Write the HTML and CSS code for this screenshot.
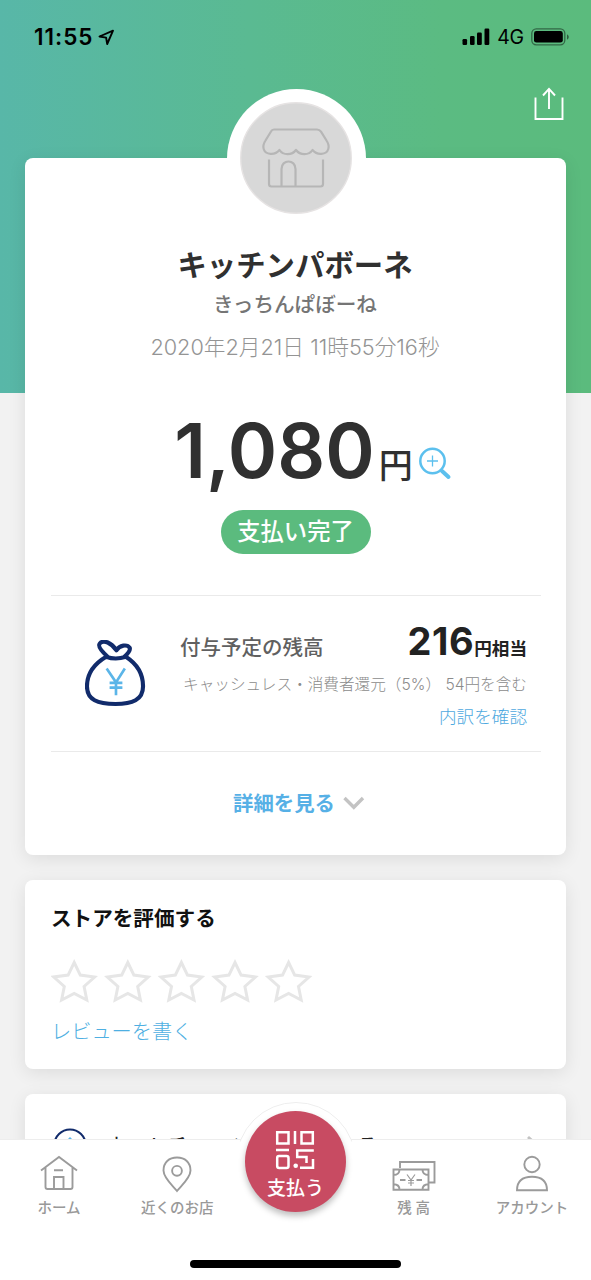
FILE: index.html
```html
<!DOCTYPE html>
<html lang="ja">
<head>
<meta charset="utf-8">
<title>支払い完了</title>
<link rel="stylesheet" href="styles.css">
</head>
<body>
<div class="screen">
  <header class="hero">
    <div class="status">
      <span class="clock">11:55</span>
      <svg class="location" width="17" height="17" viewBox="0 0 17 17"><path d="M1.5 7.5 15 1.7 9.2 15 8.1 8.6Z" fill="none" stroke="#000" stroke-width="1.9" stroke-linejoin="round"/></svg>
      <svg class="signal" width="28" height="18" viewBox="0 0 28 18"><rect x="0.5" y="11" width="4.6" height="6" rx="1.2"/><rect x="8" y="8" width="4.6" height="9" rx="1.2"/><rect x="15" y="4.5" width="4.8" height="12.5" rx="1.2"/><rect x="22.5" y="0.5" width="4.8" height="16.5" rx="1.2"/></svg>
      <span class="network">4G</span>
      <svg class="battery" width="39" height="18" viewBox="0 0 39 18"><rect x="0.8" y="0.8" width="33" height="16" rx="4.5" fill="none" stroke="#000" stroke-opacity=".45" stroke-width="1.3"/><rect x="3" y="3" width="28.8" height="11.6" rx="2.4"/><path d="M36 6.2q1.8 1 1.8 2.8t-1.8 2.8z" opacity=".5"/></svg>
    </div>
    <svg class="share" width="30" height="34" viewBox="0 0 30 34"><path d="M1.5 10.5V32H28.5V10.5M15 22V2M9 8.5 15 1.8l6 6.7" fill="none" stroke="#fff" stroke-width="1.9"/></svg>
  </header>

  <main class="cards">
    <section class="card receipt">
      <div class="store-logo">
        <svg width="112" height="112" viewBox="0 0 112 112"><circle cx="56" cy="56" r="55.3" fill="#d8d8d8" stroke="#e6e3e3" stroke-width="1.4"/><g fill="none" stroke="#b6b6b6" stroke-width="2.2" stroke-linejoin="round"><path d="M34 27.5H77Q79.500 27.500 81 29.700L86.500 38.500Q89.500 43 88.300 47C86.500 53 77 53.500 72.500 48C69 53.500 60 53.500 56 48C52 53.500 43 53.500 39.500 48C35 53.500 25.500 53 23.700 47Q22.500 43 25.500 38.500L31 29.500Q32 27.500 34 27.500Z"/><path d="M29 57.500V82Q29 84.500 31.500 84.500H80.500Q83 84.500 83 82V57.500"/><path d="M41.500 84V67C41.500 57 55.500 57 55.500 67V84"/></g></svg>
      </div>
      <h1 class="store-name">キッチンパボーネ</h1>
      <p class="store-kana">きっちんぱぼーね</p>
      <p class="paid-at">2020年2月21日 11時55分16秒</p>
      <div class="amount">
        <span class="amount-value">1,080</span><span class="amount-unit">円</span>
        <svg class="magnifier" width="33" height="33" viewBox="0 0 33 33" fill="none" stroke="#5cc0ee"><circle cx="13.500" cy="14" r="12.200" stroke-width="2.500"/><path d="M23 24 29.500 30" stroke-width="4" stroke-linecap="round"/><path d="M8 14h11M13.500 8.500v11" stroke-width="1.300"/></svg>
      </div>
      <span class="pill">支払い完了</span>
      <div class="reward">
        <svg class="bag" width="61" height="67" viewBox="0 0 62 68" fill="none"><path d="M23 17Q12 7 15 3.500C19-1 27 3 32 10.500C35 5 43 4 45.500 8Q46.500 11 40 17M21.500 17Q31 20.500 41.500 17M21.500 17C8 25 2 35 2 47C2 61 13 65 31 65C48 65 59 61 59 47C59 35 54 25 41.500 17" stroke="#112b6b" stroke-width="4.200" stroke-linejoin="round"/><path d="M22 29 31.500 43 40.500 29M31.500 42V56M25 43.500H38M25 48.300H38" stroke="#5bb5e8" stroke-width="2.700"/></svg>
        <div class="reward-text">
          <div class="reward-row"><span class="reward-label">付与予定の残高</span><span class="reward-sum"><b class="reward-num">216</b>円相当</span></div>
          <p class="reward-note">キャッシュレス・消費者還元（5%） 54円を含む</p>
          <a class="reward-link">内訳を確認</a>
        </div>
      </div>
      <div class="details"><span>詳細を見る</span><svg width="22" height="15" viewBox="0 0 22 15"><path d="m1.500 2 9.300 9.300L20 2" fill="none" stroke="#c3c3c3" stroke-width="3.400"/></svg></div>
    </section>

    <section class="card rating">
      <h2 class="rating-title">ストアを評価する</h2>
      <svg class="stars" width="262" height="44" viewBox="0 0 262 44"><defs><path id="star" d="M23.200 3.500 29.300 16.100 43.600 18 33.100 27.500 35.800 41 23.200 34.500 10.600 41 13.300 27.500 2.800 18 17.100 16.100Z" fill="none" stroke="#e6e6e6" stroke-width="3"/></defs><use href="#star"/><use href="#star" x="53.600"/><use href="#star" x="107.200"/><use href="#star" x="160.800"/><use href="#star" x="214.400"/></svg>
      <a class="review-link">レビューを書く</a>
    </section>

    <section class="card auto-charge">
      <svg width="34" height="34" viewBox="0 0 34 34" fill="none"><circle cx="17" cy="17" r="15.600" stroke="#112b6b" stroke-width="2"/><path d="m12 15 5-5 5 5M17 10v14" stroke="#5bb5e8" stroke-width="1.500"/></svg>
      <span class="auto-label">オートチャージの設定をする</span>
      <svg width="14" height="20" viewBox="0 0 14 20"><path d="m2 2 9 8-9 8" fill="none" stroke="#c3c3c3" stroke-width="3"/></svg>
    </section>
  </main>

  <nav class="tabbar">
    <a class="tab"><svg width="38" height="38" viewBox="0 0 38 38"><path d="M1 15.500 19 2 37 15.500M5.500 12.500V32Q5.500 34 7.500 34H30.500Q32.500 34 32.500 32V12.500M14 34V22H23.500V34M14 15.300H23" /></svg><span>ホーム</span></a>
    <a class="tab"><svg width="38" height="38" viewBox="0 0 38 38"><path d="M19 36C15 31 5.500 23 5.500 15.500C5.500 7.500 11 2.500 19 2.500S32.500 7.500 32.500 15.500C32.500 23 23 31 19 36Z"/><circle cx="19" cy="15.800" r="4.900"/></svg><span>近くのお店</span></a>
    <a class="tab pay"><span class="pay-button"><svg width="40" height="40" viewBox="0 0 40 40"><path d="M2.200 2.200H13.500V13.500H2.200ZM26.500 2.200H37.800V13.500H26.500ZM20 1V14M1 20H14M4 26H11.500Q13.500 26 13.500 28V36Q13.500 38 11.500 38H4.200Q2.200 38 2.200 36V28Q2.200 26 4 26ZM38.800 20.500H22.200V27H31.500V33M38 29V37.800H25"/><circle cx="20.700" cy="35.700" r="2.300"/></svg><span>支払う</span></span></a>
    <a class="tab"><svg width="44" height="38" viewBox="0 0 44 38"><path d="M8 13V7H42.500V27.500H36.500M1.500 14.500H36.500V34.800H1.500ZM7.500 14.500Q7.500 20 1.500 20M30.500 14.500Q30.500 20 36.500 20M7.500 34.800Q7.500 29.300 1.500 29.300M30.500 34.800Q30.500 29.300 36.500 29.300M8 25H13.500M24.500 25H30"/><path class="fine" d="M15 19.500 19 25 23 19.500M19 25V31M16 25.500H22M16 28H22"/></svg><span>残 高</span></a>
    <a class="tab"><svg width="38" height="38" viewBox="0 0 38 38"><circle cx="19" cy="9.500" r="7.700"/><path d="M4 35.300C4 26 10 21.700 19 21.700S34 26 34 35.300Z"/></svg><span>アカウント</span></a>
    <div class="home-indicator"></div>
  </nav>
</div>
</body>
</html>
```
FILE: styles.css
```css
* { box-sizing: border-box; margin: 0; padding: 0; }
body {
  width: 591px;
  height: 1280px;
  overflow: hidden;
  font-family: "Inter", "Noto Sans CJK JP", sans-serif;
  background: #f2f2f2;
}
svg { display: block; flex: none; }
.screen { position: relative; height: 1280px; overflow: hidden; }
.hero {
  height: 393px;
  background: linear-gradient(90deg, #58b7a8 0%, #5aba92 42%, #5bbb82 75%, #5bbb7d 100%);
}
.status {
  display: flex;
  align-items: center;
  height: 74px;
  padding: 0 21.500px 0 34px;
}
.clock { width: 64px; font-size: 22.5px; font-weight: 600; letter-spacing: 1px; line-height: 26px; white-space: nowrap; }
.signal { margin-left: auto; }
.network { margin: 0 7px; font-size: 19.500px; font-weight: 400; letter-spacing: -.5px; }
.share { margin: 13px 0 0 534px; }

.cards {
  display: flex;
  flex-direction: column;
  gap: 25px;
  margin-top: -235px;
  padding: 0 25px;
}
.card {
  position: relative;
  background: #fff;
  border-radius: 8px;
  box-shadow: 0 4px 18px rgba(0, 0, 0, .09);
}
.receipt {
  display: flex;
  flex-direction: column;
  align-items: center;
  height: 697px;
  padding: 88px 26px 0 25px;
}
.store-logo {
  position: absolute;
  top: -69.500px;
  left: 201.500px;
  width: 139px;
  height: 139px;
  padding: 13.500px;
  border-radius: 50%;
  background: #fff;
}
.store-name { height: 39.500px; line-height: 40px; font-size: 29.400px; font-weight: 700; color: #303030; }
.store-kana { height: 36.500px; line-height: 37px; font-size: 20.600px; font-weight: 500; color: #757575; }
.paid-at { height: 50px; line-height: 50px; font-size: 21.700px; font-weight: 300; color: #949494; white-space: nowrap; }
.amount {
  display: flex;
  align-items: baseline;
  height: 137.500px;
  margin-left: 36px;
  padding-top: 10px;
  line-height: 138px;
  color: #303030;
}
.amount-value { font-size: 75px; font-weight: 600; }
.amount-unit { margin-left: 4px; font-size: 34px; font-weight: 500; }
.magnifier { align-self: center; margin: 36px 0 0 6px; }
.pill {
  display: block;
  width: 150px;
  height: 44px;
  margin-left: 1px;
  line-height: 44px;
  border-radius: 22px;
  background: #5bbb7e;
  color: #fff;
  font-size: 23.300px;
  font-weight: 500;
  text-align: center;
}
.reward {
  display: flex;
  align-self: stretch;
  height: 157px;
  margin: 41.500px -1px 0 1px;
  padding: 44px 14px 0 34px;
  border-top: 1.500px solid #eaeaea;
  border-bottom: 1.500px solid #eaeaea;
}
.reward-text { display: flex; flex: 1; flex-direction: column; align-items: flex-end; margin: -23px 0 0 34px; }
.reward-row { display: flex; align-self: stretch; justify-content: space-between; height: 52px; line-height: 48px; align-items: baseline; }
.reward-label { font-size: 20.500px; font-weight: 500; color: #606060; }
.reward-sum { font-size: 17.600px; font-weight: 700; color: #222; }
.reward-num { font-size: 38px; font-weight: 700; letter-spacing: .6px; }
.reward-note { height: 32px; line-height: 32px; font-size: 15.640px; font-weight: 300; color: #8b8b8b; white-space: nowrap; }
.reward-link { height: 32px; line-height: 32px; font-size: 17.600px; font-weight: 300; color: #4ea9e0; }
.details {
  display: flex;
  align-items: center;
  gap: 8px;
  height: 102px;
  margin-left: 8px;
  color: #56b0e6;
  font-size: 20.400px;
  font-weight: 700;
}
.details span { margin-top: -2px; }
.rating {
  display: flex;
  flex-direction: column;
  height: 189px;
  padding: 19px 26px;
}
.rating-title { height: 40px; line-height: 40px; font-size: 20.600px; font-weight: 700; color: #111; }
.stars { margin-top: 20px; }
.review-link { height: 40px; margin-top: 9px; line-height: 40px; font-size: 20.200px; font-weight: 300; color: #4eafe2; }
.auto-charge {
  display: flex;
  align-items: center;
  height: 101px;
  padding: 0 26px 0 27.500px;
}
.auto-label { flex: 1; margin: 0 0 0 17px; font-size: 21.200px; font-weight: 400; color: #222; }

.tabbar {
  position: absolute;
  left: 0;
  right: 0;
  bottom: 0;
  display: grid;
  grid-template-columns: repeat(5, 1fr);
  grid-template-rows: 84px 1fr;
  height: 141.500px;
  background: #fff;
  border-top: 1.500px solid #ededed;
}
.tab {
  display: flex;
  flex-direction: column;
  align-items: center;
  padding-top: 15px;
  color: #999;
  font-size: 14.500px;
  font-weight: 500;
  line-height: 28px;
  white-space: nowrap;
}
.tab svg { fill: none; stroke: #9b9b9b; stroke-width: 1.900; margin-bottom: 1.500px; }
.tab .fine { stroke-width: 1.200; }
.pay { position: relative; }
.pay::before {
  content: "";
  position: absolute;
  top: -38px;
  left: 0;
  width: 118px;
  height: 118px;
  border-radius: 50%;
  background: #fff;
  border: 1px solid #eee;
  clip-path: inset(0 0 80px 0);
}
.pay-button {
  position: absolute;
  top: -28.500px;
  left: 8.500px;
  display: flex;
  flex-direction: column;
  align-items: center;
  width: 101px;
  height: 101px;
  padding-top: 19px;
  border-radius: 50%;
  background: #c84b62;
  box-shadow: 0 4px 6px rgba(0, 0, 0, .25);
  color: #fff;
  font-size: 19px;
  font-weight: 500;
  line-height: 37px;
}
.pay-button svg { stroke: #fff; stroke-width: 2.500; margin: 0; }
.pay-button circle { fill: #fff; stroke: none; }
.home-indicator {
  grid-column: 1 / -1;
  justify-self: center;
  width: 211px;
  height: 8px;
  margin-top: 36px;
  border-radius: 4px;
  background: #000;
}
```
